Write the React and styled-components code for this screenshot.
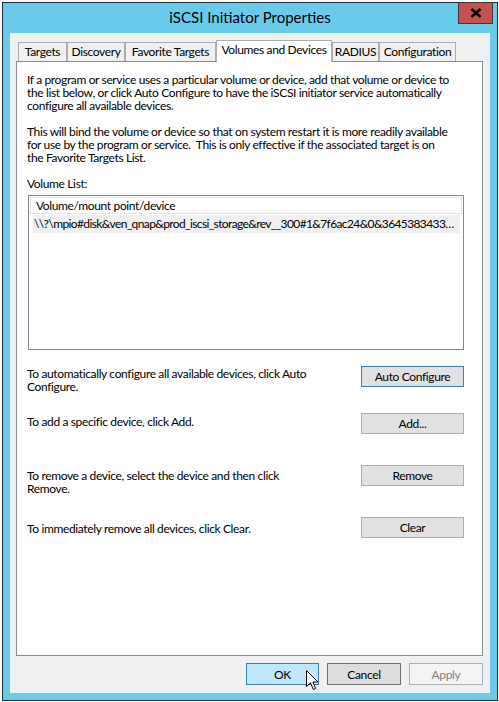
import React from 'react';
import styled, { createGlobalStyle } from 'styled-components';

const GlobalStyle = createGlobalStyle`
  html, body {
    margin: 0;
    padding: 0;
    background: #ffffff;
  }
  body {
    font-family: Lato, 'Liberation Sans', sans-serif;
    font-size: 12px;
    letter-spacing: -0.36px;
    color: #000;
  }
`;

const Window = styled.div`
  position: relative;
  box-sizing: border-box;
  margin: 2px 0 0 2px;
  width: 496px;
  height: 699px;
  border: 1px solid #2b2b2b;
  background: #68cbeb;
  display: flex;
  flex-direction: column;
`;

const TitleBar = styled.div`
  height: 30px;
  display: flex;
  align-items: center;
  justify-content: center;
  font-size: 15px;
  letter-spacing: 0;
  padding-bottom: 2px;
  box-sizing: border-box;
`;

const CloseButton = styled.div`
  position: absolute;
  top: -1px;
  right: 4px;
  box-sizing: border-box;
  width: 35px;
  height: 22px;
  background: #c75050;
  border: 1px solid #3a3a3a;
  display: flex;
  align-items: center;
  justify-content: center;
`;

const Client = styled.div`
  box-sizing: border-box;
  margin: 0 7px;
  width: 480px;
  height: 660px;
  background: #f0f0f0;
  padding: 7px 0 0 6px;
  display: flex;
  flex-direction: column;
`;

const TabRow = styled.div`
  display: flex;
  align-items: flex-end;
  height: 21px;
  padding-left: 2px;
`;

const Tab = styled.div`
  box-sizing: border-box;
  width: ${p => p.$w}px;
  height: ${p => (p.$active ? 22 : 19)}px;
  margin-bottom: ${p => (p.$active ? -1 : 0)}px;
  position: relative;
  z-index: ${p => (p.$active ? 1 : 0)};
  background: ${p => (p.$active ? '#ffffff' : '#f0f0f0')};
  border: 1px solid #acacac;
  border-bottom: none;
  display: flex;
  justify-content: center;
  padding-top: 2px;
  line-height: 14px;
  white-space: nowrap;
`;

const Panel = styled.div`
  box-sizing: border-box;
  width: 467px;
  height: 595px;
  background: #ffffff;
  border: 1px solid #898c95;
  padding: 11px 18px 0 10px;
  display: flex;
  flex-direction: column;
`;

const Para = styled.p`
  margin: 0 0 13px 0;
  line-height: 13px;
  white-space: nowrap;
`;

const Label = styled.div`
  line-height: 13px;
  margin-bottom: 5px;
`;

const ListBox = styled.div`
  box-sizing: border-box;
  margin-left: 1px;
  width: 436px;
  height: 155px;
  border: 1px solid #828790;
  padding: 1px 1px 0 1px;
`;

const ListHeader = styled.div`
  box-sizing: border-box;
  height: 17px;
  border: 1px solid #e5e5e5;
  padding-left: 5px;
  line-height: 15px;
`;

const ListItem = styled.div`
  box-sizing: border-box;
  margin: 1px 2px 0 3px;
  height: 18px;
  background: #f0f0f0;
  padding: 0 2px 0 1px;
  line-height: 18px;
  letter-spacing: -0.62px;
  white-space: nowrap;
  overflow: hidden;
`;

const Spacer = styled.div`
  height: ${p => p.$h}px;
`;

const ActionRow = styled.div`
  display: flex;
  align-items: flex-start;
  justify-content: space-between;
  height: ${p => p.$h}px;
`;

const ActionText = styled.div`
  line-height: 13px;
  padding-top: ${p => p.$offset}px;
  white-space: nowrap;
`;

const PanelButton = styled.div`
  box-sizing: border-box;
  width: 103px;
  height: 21px;
  background: #e1e1e1;
  border: 1px solid ${p => (p.$default ? '#3c7fb1' : '#adadad')};
  display: flex;
  align-items: center;
  justify-content: center;
`;

const Footer = styled.div`
  display: flex;
  justify-content: flex-end;
  gap: 8px;
  width: 467px;
  margin-top: 7px;
  position: relative;
`;

const DialogButton = styled.div`
  box-sizing: border-box;
  width: ${p => p.$w}px;
  height: 22px;
  display: flex;
  align-items: center;
  justify-content: center;
  background: ${p => p.$bg};
  border: 1px solid ${p => p.$border};
  color: ${p => p.$color || '#000'};
`;

const Cursor = styled.svg`
  position: absolute;
  left: 290px;
  top: 7px;
`;

const tabs = [
  { label: 'Targets', w: 49 },
  { label: 'Discovery', w: 58 },
  { label: 'Favorite Targets', w: 91 },
  { label: 'Volumes and Devices', w: 116, active: true },
  { label: 'RADIUS', w: 47 },
  { label: 'Configuration', w: 77 },
];

export default function App() {
  return (
    <>
      <GlobalStyle />
      <Window>
        <TitleBar>iSCSI Initiator Properties</TitleBar>
        <CloseButton>
          <svg width="12" height="10" viewBox="0 0 12 10">
            <path d="M1.5 1 L10.5 9 M10.5 1 L1.5 9" stroke="#000" strokeWidth="2.6" />
          </svg>
        </CloseButton>
        <Client>
          <TabRow>
            {tabs.map(t => (
              <Tab key={t.label} $w={t.w} $active={t.active}>{t.label}</Tab>
            ))}
          </TabRow>
          <Panel>
            <Para>
              If a program or service uses a particular volume or device, add that volume or device to<br />
              the list below, or click Auto Configure to have the iSCSI initiator service automatically<br />
              configure all available devices.
            </Para>
            <Para>
              This will bind the volume or device so that on system restart it is more readily available<br />
              for use by the program or service.&nbsp; This is only effective if the associated target is on<br />
              the Favorite Targets List.
            </Para>
            <Label>Volume List:</Label>
            <ListBox>
              <ListHeader>Volume/mount point/device</ListHeader>
              <ListItem>\\?\mpio#disk&amp;ven_qnap&amp;prod_iscsi_storage&amp;rev__300#1&amp;7f6ac24&amp;0&amp;3645383433…</ListItem>
            </ListBox>
            <Spacer $h={16} />
            <ActionRow $h={47}>
              <ActionText $offset={1}>
                To automatically configure all available devices, click Auto<br />Configure.
              </ActionText>
              <PanelButton $default>Auto Configure</PanelButton>
            </ActionRow>
            <ActionRow $h={52}>
              <ActionText $offset={2}>To add a specific device, click Add.</ActionText>
              <PanelButton>Add...</PanelButton>
            </ActionRow>
            <ActionRow $h={52}>
              <ActionText $offset={4}>
                To remove a device, select the device and then click<br />Remove.
              </ActionText>
              <PanelButton>Remove</PanelButton>
            </ActionRow>
            <ActionRow $h={30}>
              <ActionText $offset={5}>To immediately remove all devices, click Clear.</ActionText>
              <PanelButton>Clear</PanelButton>
            </ActionRow>
          </Panel>
          <Footer>
            <DialogButton $w={73} $bg="#bee6fd" $border="#3c7fb1">OK</DialogButton>
            <DialogButton $w={74} $bg="#dddddd" $border="#707070">Cancel</DialogButton>
            <DialogButton $w={74} $bg="#f4f4f4" $border="#adb2b5" $color="#838383">Apply</DialogButton>
            <Cursor width="13" height="21" viewBox="0 0 13 21">
              <path d="M0.5 0.5 L0.5 16.5 L4.5 12.8 L7.3 19.5 L9.6 18.5 L6.9 12 L12 12 Z" fill="#fff" stroke="#000" strokeWidth="1" strokeLinejoin="miter" />
            </Cursor>
          </Footer>
        </Client>
      </Window>
    </>
  );
}
